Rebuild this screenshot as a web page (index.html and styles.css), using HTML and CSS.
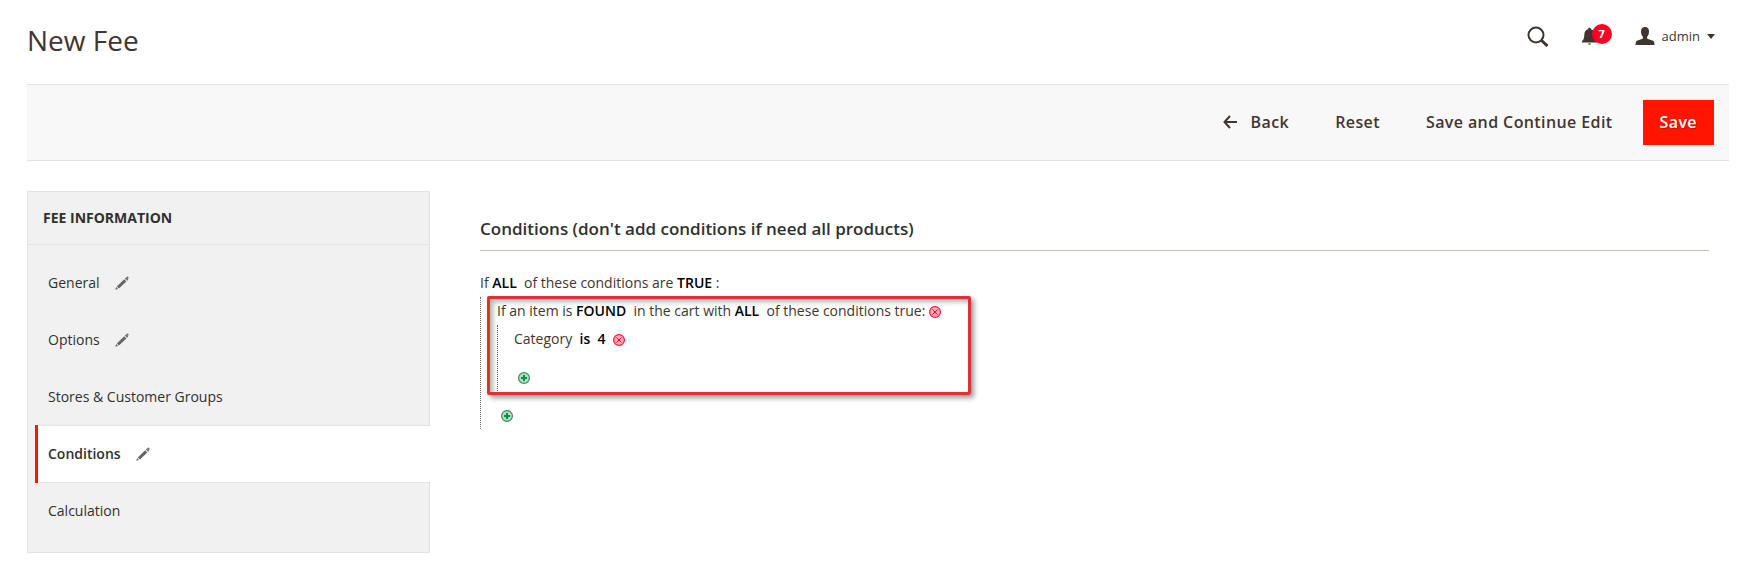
FILE: index.html
```html
<!DOCTYPE html>
<html lang="en">
<head>
  <meta charset="UTF-8" />
  <meta name="viewport" content="width=device-width, initial-scale=1.0" />
  <title>New Fee</title>
  <link rel="stylesheet" href="styles.css">
</head>
<body>
  <!-- shared icons -->
  <svg class="sprite" aria-hidden="true">
    <symbol id="pencil" viewBox="0 0 14 14">
      <path d="M0.3 13.7l0.8-2.7 1.9 1.9zM1.8 10.4l7.4-7.2 2.2 2.2-7.5 7.1zM9.9 2.5l1.1-1 2.2 2.2-1.1 1zM11.6 0.9q0.7-0.8 1.4-0.1l0.4 0.5q0.5 0.6-0.1 1.2l-0.5 0.4-1.6-1.6z" />
    </symbol>
    <symbol id="remove" viewBox="0 0 12 12">
      <circle cx="6" cy="6" r="5.4" fill="#ffa9b5" stroke="#f5153f" stroke-width="1.2" />
      <path d="M3.5 3.5l5 5M8.5 3.5l-5 5" fill="none" stroke="#f0002c" />
    </symbol>
    <symbol id="add" viewBox="0 0 12 12">
      <circle cx="6" cy="6" r="5.4" fill="#b5dcc0" stroke="#38905a" stroke-width="1.2" />
      <path d="M6 3v6M3 6h6" fill="none" stroke="#00964a" stroke-width="2" />
    </symbol>
  </svg>

  <header class="page-header">
    <h1>New Fee</h1>
    <div class="header-tools">
      <button type="button" class="tool" aria-label="Search">
        <svg width="22" height="22" viewBox="0 0 22 22">
          <circle cx="9" cy="10" r="7.5" fill="none" stroke="#41362f" stroke-width="2" />
          <path d="M14 15l6.5 6" stroke="#41362f" stroke-width="3" />
        </svg>
      </button>
      <button type="button" class="tool notifications" aria-label="Notifications">
        <svg width="16" height="20" viewBox="0 0 16 20">
          <path fill="#41362f" d="M0 16.5v-1.3c1.6-1.6 2.2-3 2.3-6.4C2.4 5.6 3.7 3.7 6 3.2c0-2 3-2 3 0 2.3 0.5 3.6 2.4 3.7 5.6 0.1 3.4 0.7 4.8 2.3 6.4v1.3zM5.7 17.5h3.600q-1.8 2.600-3.600 0z" />
        </svg>
        <span class="badge">7</span>
      </button>
      <button type="button" class="tool account">
        <svg width="20" height="18" viewBox="0 0 20 18">
          <path fill="#41362f" d="M10 0c2.7 0 4 1.6 4 4.3 0 2.5-0.7 4.3-1.9 5.5v1.7c1.2 0.9 3.2 1.2 5.4 2 1.5 0.6 2 1.8 2 4.5h-19c0-2.7 0.5-3.9 2-4.5 2.2-0.8 4.2-1.1 5.4-2v-1.7C6.7 8.6 6 6.8 6 4.3 6 1.6 7.3 0 10 0z" />
        </svg>
        <span>admin</span>
        <svg width="8" height="5" viewBox="0 0 8 5"><path fill="#41362f" d="M0 0h8l-4 5z" /></svg>
      </button>
    </div>
  </header>

  <div class="page-actions">
    <button type="button" class="action back">
      <svg width="14" height="14" viewBox="0 0 14 14">
        <path d="M14 7H2M7 1L1.5 7l5.5 6" fill="none" stroke="#41362f" stroke-width="2" />
      </svg>
      Back
    </button>
    <button type="button" class="action">Reset</button>
    <button type="button" class="action">Save and Continue Edit</button>
    <button type="button" class="action primary">Save</button>
  </div>

  <div class="page-columns">
    <nav class="side-nav">
      <h2>Fee Information</h2>
      <ul>
        <li><a href="#">General <svg class="pencil"><use href="#pencil" /></svg></a></li>
        <li><a href="#">Options <svg class="pencil"><use href="#pencil" /></svg></a></li>
        <li><a href="#">Stores &amp; Customer Groups</a></li>
        <li class="active"><a href="#">Conditions <svg class="pencil"><use href="#pencil" /></svg></a></li>
        <li><a href="#">Calculation</a></li>
      </ul>
    </nav>

    <main>
      <h2>Conditions (don't add conditions if need all products)</h2>
      <div class="rule">
        <p>If <a href="#">ALL</a>&nbsp; of these conditions are <a href="#">TRUE</a> :</p>
        <div class="rule-children">
          <div class="rule highlight">
            <p>If an item is <a href="#">FOUND</a>&nbsp; in the cart with <a href="#">ALL</a>&nbsp; of these conditions true: <button type="button" class="rule-btn" aria-label="Remove"><svg><use href="#remove" /></svg></button></p>
            <div class="rule-children">
              <p>Category&nbsp; <a href="#">is</a>&nbsp; <a href="#">4</a>&nbsp; <button type="button" class="rule-btn" aria-label="Remove"><svg><use href="#remove" /></svg></button></p>
              <div class="rule-add">
                <button type="button" class="rule-btn" aria-label="Add"><svg><use href="#add" /></svg></button>
              </div>
            </div>
          </div>
          <div class="rule-add">
            <button type="button" class="rule-btn" aria-label="Add"><svg><use href="#add" /></svg></button>
          </div>
        </div>
      </div>
    </main>
  </div>
</body>
</html>
```
FILE: styles.css
```css
:root {
  --text: #41362f;
  --dark: #303030;
  --border: #e3e3e3;
  --red: #ff1500;
}

* {
  box-sizing: border-box;
  margin: 0;
  padding: 0;
}

body {
  background: #fff;
  color: var(--text);
  font-family: 'Open Sans', 'Noto Sans', sans-serif;
  font-size: 14px;
  line-height: 20px;
  padding: 0 24px 24px 27px;
}

button {
  border: none;
  background: none;
  font-family: inherit;
  color: inherit;
  cursor: pointer;
}

a {
  color: inherit;
  text-decoration: none;
}

.sprite {
  display: none;
}

/* header */
.page-header {
  display: flex;
  justify-content: space-between;
  padding: 20px 14px 24px 0;
}

h1 {
  font-size: 28px;
  font-weight: 400;
  line-height: 40px;
}

.header-tools {
  display: flex;
  align-items: flex-start;
  gap: 33px;
}

.tool {
  display: flex;
  align-items: center;
  height: 32px;
}

.notifications {
  position: relative;
  width: 20px;
}

.badge {
  position: absolute;
  top: 4px;
  left: 10px;
  width: 20px;
  height: 20px;
  border-radius: 50%;
  background: #ff0025;
  color: #fff;
  font-size: 11px;
  font-weight: 700;
  line-height: 20px;
}

.account {
  gap: 7px;
  font-size: 13px;
}

/* action bar */
.page-actions {
  display: flex;
  justify-content: flex-end;
  gap: 14px;
  padding: 15px;
  background: #f8f8f8;
  border-top: 1px solid var(--border);
  border-bottom: 1px solid var(--border);
}

.action {
  display: flex;
  align-items: center;
  height: 45px;
  padding: 0 16px 2px;
  font-size: 16px;
  font-weight: 600;
  letter-spacing: 0.025em;
}

.back {
  gap: 14px;
}

.primary {
  padding: 0 17px 2px;
  background: var(--red);
  color: #fff;
  text-shadow: 1px 1px 0 rgba(0, 0, 0, 0.25);
}

/* columns */
.page-columns {
  display: flex;
  align-items: flex-start;
  gap: 50px;
  padding-top: 30px;
}

.side-nav {
  flex: 0 0 403px;
  background: #f1f1f1;
  border: 1px solid var(--border);
}

.side-nav h2 {
  padding: 16px 15px;
  border-bottom: 1px solid var(--border);
  color: var(--dark);
  font-size: 14px;
  font-weight: 700;
  line-height: 20px;
  text-transform: uppercase;
}

.side-nav ul {
  list-style: none;
  padding: 9px 0 13px 7px;
}

.side-nav li {
  border-left: 3px solid transparent;
  margin-bottom: -1px;
}

.side-nav a {
  display: flex;
  align-items: center;
  gap: 15px;
  height: 58px;
  padding-left: 10px;
  color: var(--dark);
}

.side-nav .active {
  border-left-color: var(--red);
  margin-right: -1px;
}

.active a {
  background: #fff;
  border-top: 1px solid var(--border);
  border-bottom: 1px solid var(--border);
  font-weight: 600;
}

.pencil {
  width: 14px;
  height: 14px;
  fill: #666;
}

main {
  flex: 1;
  padding: 26px 20px 0 0;
}

main h2 {
  padding-bottom: 9px;
  margin-bottom: 18px;
  border-bottom: 1px solid #cac3b4;
  color: var(--dark);
  font-size: 17px;
  font-weight: 600;
  line-height: 24px;
}

/* condition tree */
.rule p {
  line-height: 28px;
}

.rule a {
  color: #000;
  font-weight: 600;
}

.rule-children {
  padding-left: 16px;
  border-left: 1px dotted #666;
}

.rule-add {
  display: flex;
  align-items: flex-end;
  height: 38px;
  padding: 0 0 7px 4px;
}

.rule-btn {
  width: 12px;
  height: 12px;
  vertical-align: -2px;
}

.rule-btn svg {
  display: block;
  width: 12px;
  height: 12px;
}

.highlight {
  position: relative;
  width: fit-content;
}

.highlight::after {
  content: '';
  position: absolute;
  inset: -1px -30px -4px -10px;
  border: 3px solid #e03131;
  border-radius: 2px;
  box-shadow: 3px 3px 5px rgba(0, 0, 0, 0.4), inset 3px 3px 5px rgba(0, 0, 0, 0.3);
  pointer-events: none;
}
```
